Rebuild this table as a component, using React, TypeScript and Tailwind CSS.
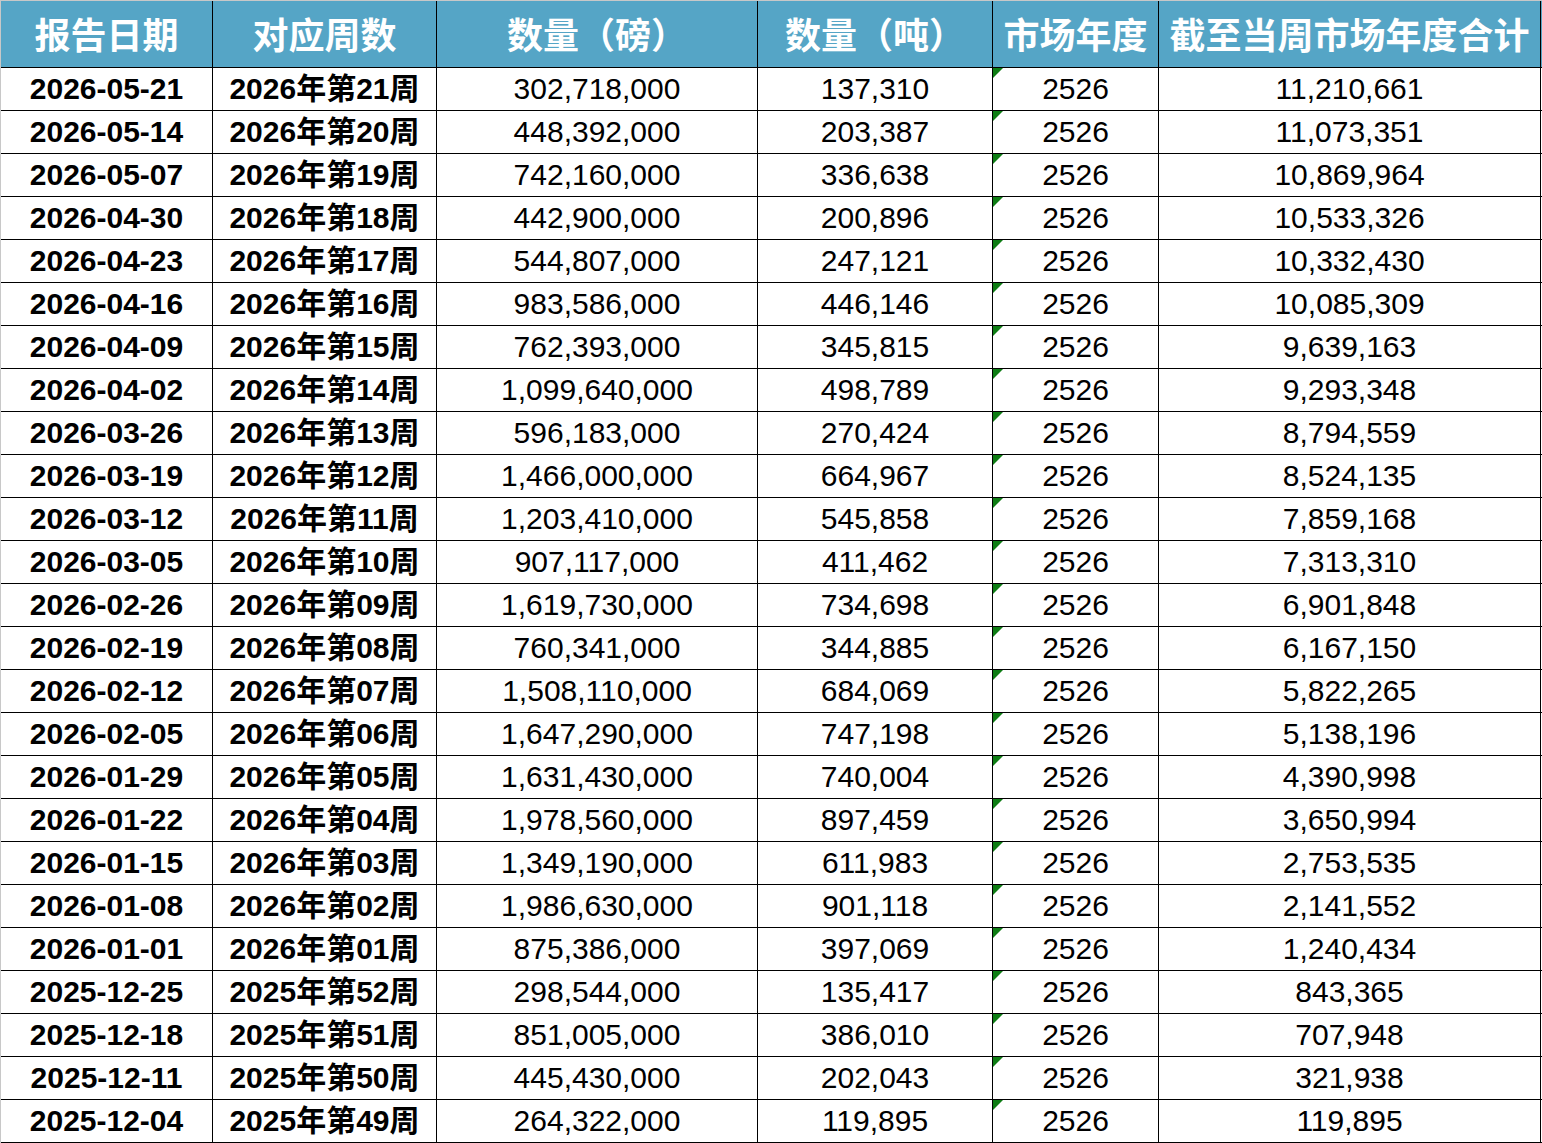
import React from "react";

const rows: [string, string, string, string, string, string][] = [
  ["2026-05-21", "2026年第21周", "302,718,000", "137,310", "2526", "11,210,661"],
  ["2026-05-14", "2026年第20周", "448,392,000", "203,387", "2526", "11,073,351"],
  ["2026-05-07", "2026年第19周", "742,160,000", "336,638", "2526", "10,869,964"],
  ["2026-04-30", "2026年第18周", "442,900,000", "200,896", "2526", "10,533,326"],
  ["2026-04-23", "2026年第17周", "544,807,000", "247,121", "2526", "10,332,430"],
  ["2026-04-16", "2026年第16周", "983,586,000", "446,146", "2526", "10,085,309"],
  ["2026-04-09", "2026年第15周", "762,393,000", "345,815", "2526", "9,639,163"],
  ["2026-04-02", "2026年第14周", "1,099,640,000", "498,789", "2526", "9,293,348"],
  ["2026-03-26", "2026年第13周", "596,183,000", "270,424", "2526", "8,794,559"],
  ["2026-03-19", "2026年第12周", "1,466,000,000", "664,967", "2526", "8,524,135"],
  ["2026-03-12", "2026年第11周", "1,203,410,000", "545,858", "2526", "7,859,168"],
  ["2026-03-05", "2026年第10周", "907,117,000", "411,462", "2526", "7,313,310"],
  ["2026-02-26", "2026年第09周", "1,619,730,000", "734,698", "2526", "6,901,848"],
  ["2026-02-19", "2026年第08周", "760,341,000", "344,885", "2526", "6,167,150"],
  ["2026-02-12", "2026年第07周", "1,508,110,000", "684,069", "2526", "5,822,265"],
  ["2026-02-05", "2026年第06周", "1,647,290,000", "747,198", "2526", "5,138,196"],
  ["2026-01-29", "2026年第05周", "1,631,430,000", "740,004", "2526", "4,390,998"],
  ["2026-01-22", "2026年第04周", "1,978,560,000", "897,459", "2526", "3,650,994"],
  ["2026-01-15", "2026年第03周", "1,349,190,000", "611,983", "2526", "2,753,535"],
  ["2026-01-08", "2026年第02周", "1,986,630,000", "901,118", "2526", "2,141,552"],
  ["2026-01-01", "2026年第01周", "875,386,000", "397,069", "2526", "1,240,434"],
  ["2025-12-25", "2025年第52周", "298,544,000", "135,417", "2526", "843,365"],
  ["2025-12-18", "2025年第51周", "851,005,000", "386,010", "2526", "707,948"],
  ["2025-12-11", "2025年第50周", "445,430,000", "202,043", "2526", "321,938"],
  ["2025-12-04", "2025年第49周", "264,322,000", "119,895", "2526", "119,895"],
];

const headers = ["报告日期", "对应周数", "数量（磅）", "数量（吨）", "市场年度", "截至当周市场年度合计"];
const widths = ["w-[212px]", "w-[224px]", "w-[321px]", "w-[235px]", "w-[166px]", "w-[382px]"];

const font = { fontFamily: '"Liberation Sans", "Noto Sans CJK SC", Arial, sans-serif' };

export default function App() {
  return (
    <div className="w-[1542px] h-[1143px] bg-white overflow-hidden" style={font}>
      <div className="border-t border-l border-[#c8c8c8] w-[1542px] box-border">
        <div className="flex h-[67px] bg-[#55a5c6] border-b border-black box-border">
          {headers.map((h, i) => (
            <div
              key={i}
              className={`${widths[i]} shrink-0 h-full flex items-center justify-center border-r border-black box-border text-white font-bold text-[36px] leading-none whitespace-nowrap`}
              style={{ fontFamily: '"Noto Sans CJK SC", "Liberation Sans", sans-serif' }}
            >
              <span className="pb-[2px]">{h}</span>
            </div>
          ))}
        </div>
        {rows.map((r, ri) => (
          <div key={ri} className="flex h-[43px] border-b border-black box-border">
            {r.map((c, ci) => (
              <div
                key={ci}
                className={`${widths[ci]} shrink-0 h-full relative flex items-center justify-center border-r border-black box-border text-black text-[30px] leading-none whitespace-nowrap ${ci < 2 ? "font-bold" : "font-normal"}`}
              >
                {ci === 4 && (
                  <div className="absolute left-0 top-0 w-0 h-0 border-t-[10px] border-r-[10px] border-t-[#0e7d14] border-r-transparent" />
                )}
                <span>{c}</span>
              </div>
            ))}
          </div>
        ))}
      </div>
    </div>
  );
}
